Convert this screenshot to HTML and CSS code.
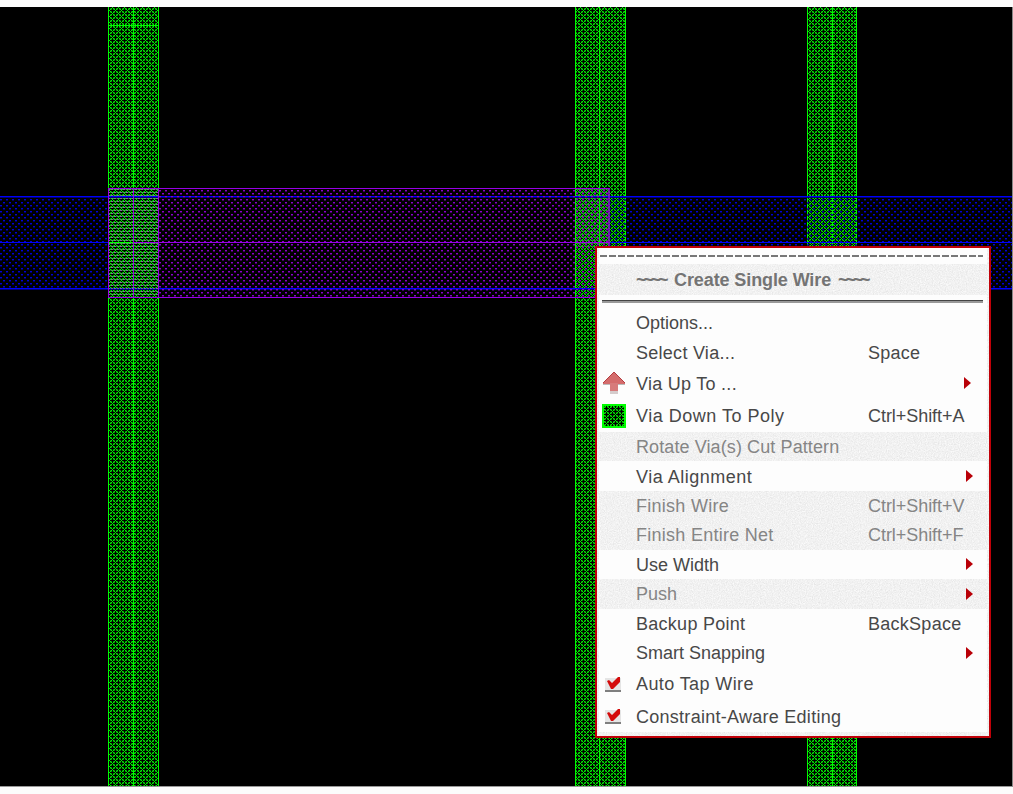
FILE: index.html
```html
<!DOCTYPE html>
<html lang="en">
<head>
<meta charset="utf-8">
<title>Create Single Wire</title>
<link rel="stylesheet" href="styles.css">
</head>
<body>
<main class="editor">
  <svg class="layout" width="1012" height="779" viewBox="0 7 1012 779" shape-rendering="crispEdges">
    <defs>
      <pattern id="poly" width="6" height="6" patternUnits="userSpaceOnUse">
        <rect width="6" height="6" fill="#000"/>
        <path d="M0 0h1v1H0zM2 0h1v1H2zM0 2h1v1H0zM2 2h1v1H2zM3 3h1v1H3zM5 3h1v1H5zM3 5h1v1H3zM5 5h1v1H5z" fill="#008000"/>
        <path d="M3 0h1v1H3zM5 0h1v1H5zM4 1h1v1H4zM3 2h1v1H3zM5 2h1v1H5zM0 3h1v1H0zM2 3h1v1H2zM1 4h1v1H1zM0 5h1v1H0zM2 5h1v1H2z" fill="#00f000"/>
      </pattern>
      <pattern id="metal" width="6" height="6" patternUnits="userSpaceOnUse">
        <path d="M0 1h2v1H0zM3 4h2v1H3z" fill="#0000d8"/><path d="M0 2h2v1H0zM3 5h2v1H3z" fill="#000060"/>
      </pattern>
      <pattern id="wire" width="6" height="6" patternUnits="userSpaceOnUse">
        <path d="M0 1h2v1H0zM3 4h2v1H3z" fill="#8a00cc"/><path d="M0 2h2v1H0zM3 5h2v1H3z" fill="#400060"/>
      </pattern>
      <pattern id="cross" width="6" height="6" patternUnits="userSpaceOnUse">
        <path d="M0 0h2v1H0zM3 3h2v1H3z" fill="#8a5fa4"/><path d="M3 0h2v1H3zM0 3h2v1H0z" fill="#5b8c68"/>
      </pattern>
    </defs>
    <rect y="7" width="1012" height="779" fill="#000"/>
    <rect y="197" width="1012" height="92" fill="url(#metal)"/>
    <g fill="url(#poly)">
      <rect x="108" y="7" width="51" height="779"/>
      <rect x="575" y="7" width="51" height="779"/>
      <rect x="807" y="7" width="50" height="779"/>
    </g>
    <path d="M108.500 7v779M133.500 7v779M158.500 7v779M575.500 7v779M599.500 7v779M625.500 7v779M807.500 7v779M832.500 7v779M856.500 7v779M108 25.500h51" stroke="#00fa00" fill="none"/>
    <rect x="807" y="197" width="50" height="50" fill="url(#metal)" opacity=".8"/>
    <rect x="600" y="197" width="26" height="50" fill="url(#metal)" opacity=".8"/>
    <g fill="#0000fa">
      <rect y="196" width="1012" height="1"/>
      <rect y="242" width="1012" height="1"/>
      <rect y="288" width="1012" height="1"/>
    </g>
    <g fill="#000078">
      <rect y="197" width="1012" height="1"/>
      <rect y="289" width="1012" height="1"/>
    </g>
    <rect x="159" y="189" width="450" height="108" fill="url(#wire)"/>
    <rect x="109" y="189" width="50" height="108" fill="url(#cross)"/>
    <rect x="575" y="189" width="34" height="58" fill="url(#cross)" opacity=".55"/>
    <g fill="#9800e6">
      <rect x="108" y="188" width="502" height="1"/>
      <rect x="108" y="297" width="502" height="1"/>
      <rect x="108" y="188" width="1" height="110"/>
      <rect x="133" y="188" width="1" height="110"/>
      <rect x="158" y="188" width="1" height="110"/>
      <rect x="608" y="188" width="2" height="110" opacity=".7"/>
      <rect x="133" y="242" width="477" height="1"/>
    </g>
    <rect x="109" y="242" width="24" height="1" fill="#0f0"/>
  </svg>
</main>

<div class="menu">
  <svg class="grain" width="392" height="488">
    <filter id="noise" x="0" y="0" width="100%" height="100%">
      <feTurbulence type="fractalNoise" baseFrequency=".85" numOctaves="2" seed="4"/>
      <feColorMatrix values=".28 0 0 0 .74  .28 0 0 0 .74  .28 0 0 0 .74  0 0 0 0 1"/>
    </filter>
    <rect width="392" height="488" filter="url(#noise)"/>
  </svg>
  <div class="items">
    <div class="tear"><svg width="384" height="4"><path d="M1 2h383" stroke="#777" stroke-width="2" stroke-dasharray="7 2"/></svg></div>
    <div class="title"><span class="tilde">~~~~</span><span>Create Single Wire</span><span class="tilde">~~~~</span></div>
    <div class="rule"></div>
    <div class="row"><span class="icon"></span><span class="label tight">Options...</span></div>
    <div class="row"><span class="icon"></span><span class="label">Select Via...</span><span class="key">Space</span></div>
    <div class="row tall"><span class="icon"><svg width="24" height="24" viewBox="0 0 24 24"><path d="M8 13h8v10H8z" fill="#d5cccc"/><path d="M12 1 1 12v1h22v-1z" fill="#d46c6c"/><path d="M12 1 1 12M12 1l11 11" stroke="#b43c40" fill="none"/><path d="M8 12h8v8H8z" fill="#d77b7b"/><path d="M1 13.500h7M16 13.500h7" stroke="#bbb"/></svg></span><span class="label">Via Up To ...</span><span class="arrow high"></span></div>
    <div class="row tall"><span class="icon"><svg width="24" height="24" shape-rendering="crispEdges"><rect width="24" height="24" fill="url(#poly)"/><rect x="1" y="1" width="22" height="22" fill="none" stroke="#0f0" stroke-width="2"/></svg></span><span class="label loose">Via Down To Poly</span><span class="key chord">Ctrl+Shift+A</span></div>
    <div class="row off"><span class="icon"></span><span class="label pattern">Rotate Via(s) Cut Pattern</span></div>
    <div class="row"><span class="icon"></span><span class="label loose">Via Alignment</span><span class="arrow"></span></div>
    <div class="row off"><span class="icon"></span><span class="label">Finish Wire</span><span class="key chord">Ctrl+Shift+V</span></div>
    <div class="row off"><span class="icon"></span><span class="label">Finish Entire Net</span><span class="key chord">Ctrl+Shift+F</span></div>
    <div class="row"><span class="icon"></span><span class="label tight">Use Width</span><span class="arrow"></span></div>
    <div class="row off"><span class="icon"></span><span class="label tight">Push</span><span class="arrow"></span></div>
    <div class="row"><span class="icon"></span><span class="label">Backup Point</span><span class="key">BackSpace</span></div>
    <div class="row"><span class="icon"></span><span class="label tight">Smart Snapping</span><span class="arrow"></span></div>
    <div class="row tall"><span class="icon check"><svg width="18" height="18" viewBox="0 0 18 18"><path d="M1 3h16v12H1z" fill="#e5e5e5"/><path d="M1 16h16" stroke="#555" stroke-width="1.500"/><path d="M3 6l2-1 3 3 6-6h2v5l-7 7H7z" fill="#d40c0c"/></svg></span><span class="label wide">Auto Tap Wire</span></div>
    <div class="row tall"><span class="icon check"><svg width="18" height="18" viewBox="0 0 18 18"><path d="M1 3h16v12H1z" fill="#e5e5e5"/><path d="M1 16h16" stroke="#555" stroke-width="1.500"/><path d="M3 6l2-1 3 3 6-6h2v5l-7 7H7z" fill="#d40c0c"/></svg></span><span class="label">Constraint-Aware Editing</span></div>
  </div>
</div>
</body>
</html>
```
FILE: styles.css
```css
* { box-sizing: border-box; }
body {
  margin: 0;
  height: 794px;
  overflow: hidden;
  background: #fcfcfc;
  font-family: "Liberation Sans", Arial, sans-serif;
}
.editor {
  width: 1013px;
  height: 794px;
  padding-top: 7px;
}
.layout {
  display: block;
  box-sizing: content-box;
  border-right: 1px solid #888;
  border-bottom: 1px solid #999;
}
.menu {
  position: absolute;
  left: 595px;
  top: 246px;
  width: 396px;
  height: 492px;
  border: 2px solid #c00008;
  background: #f4f4f4;
}
.grain {
  position: absolute;
  left: 0;
  top: 0;
}
.items {
  position: relative;
  width: 388px;
  margin-left: 2px;
  font-size: 18px;
  letter-spacing: .27px;
  color: #484848;
}
.tear { height: 16px; padding-top: 6px; background: #fdfdfd; }
.tear svg { display: block; }
.title {
  display: flex;
  align-items: center;
  gap: 7px;
  height: 31px;
  padding: 2px 0 0 37px;
  font-weight: 700;
  font-size: 18px;
  letter-spacing: -.1px;
  color: #747474;
}
.tilde {
  width: 31px;
  letter-spacing: -3.2px;
  font-weight: 700;
}
.rule {
  height: 13px;
  padding: 5px 4px 0 3px;
  background: #fdfdfd;
}
.rule::before {
  content: "";
  display: block;
  height: 2px;
  border-top: 1px solid #444;
  background: #999;
}
.row {
  display: flex;
  align-items: center;
  height: 29.45px;
  background: #fdfdfd;
  white-space: nowrap;
}
.tall { height: 32.5px; }
.off { color: #858585; background: transparent; }
.icon {
  display: flex;
  justify-content: center;
  width: 29px;
  margin-right: 8px;
}
.check { padding-right: 2px; }
.label { flex: none; width: 232px; padding-top: 2px; }
.tight { letter-spacing: 0; }
.loose { letter-spacing: .5px; }
.pattern { letter-spacing: .1px; }
.wide { letter-spacing: .4px; }
.key { width: 112px; padding-top: 2px; }
.chord { letter-spacing: -.05px; }
.arrow {
  margin-left: 98px;
  border-left: 7px solid #b90008;
  border-top: 6px solid transparent;
  border-bottom: 6px solid transparent;
}
.high { margin-left: 96px; }
```
